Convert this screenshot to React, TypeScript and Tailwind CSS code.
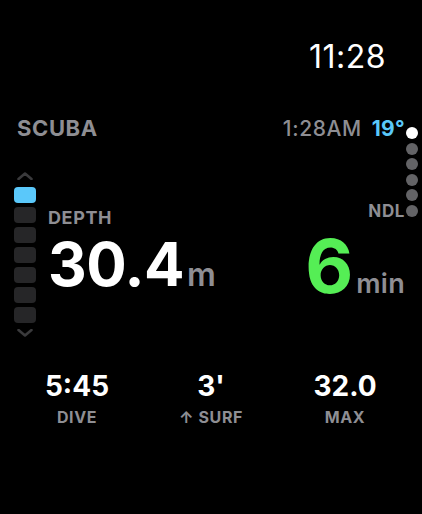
import React from "react";

const Chevron = ({ up }: { up: boolean }) => (
  <svg width="18" height="8" viewBox="0 0 18 8" className="block">
    <path
      d={up ? "M2.5 7 L9 1.5 L15.5 7" : "M2.5 1 L9 6.5 L15.5 1"}
      fill="none"
      stroke="#3a3a3c"
      strokeWidth="2.6"
      strokeLinecap="round"
      strokeLinejoin="round"
    />
  </svg>
);

export default function App() {
  const font = { fontFamily: "Inter, 'Noto Sans', sans-serif" };
  return (
    <div
      className="w-[422px] h-[514px] bg-black text-white flex flex-col overflow-hidden"
      style={font}
    >
      {/* Clock */}
      <div className="pt-[41px] pr-[36px] flex justify-end">
        <span className="text-[32px] leading-none font-normal tracking-[0.5px]">11:28</span>
      </div>

      {/* Main grid */}
      <div className="mt-[44px] pl-[14px] pr-[4px] grid grid-cols-[22px_1fr_auto_12px] grid-rows-[22px_auto] gap-x-0">
        {/* Row 1 */}
        <div className="col-start-1 col-span-2 row-start-1 pl-[3px] self-start">
          <span className="text-[22px] leading-none font-bold text-[#8e8e93] tracking-[0.6px]">SCUBA</span>
        </div>
        <div className="col-start-3 row-start-1 self-start pt-[1px] pr-[1px] flex items-baseline gap-[10px] whitespace-nowrap">
          <span className="text-[21px] leading-none font-medium text-[#8e8e93] tracking-[0.6px]">1:28AM</span>
          <span className="text-[21px] leading-none font-bold text-[#5ac8fa] tracking-[0.3px]">19°</span>
        </div>
        <div className="col-start-4 row-start-1 row-span-2 self-start mt-[10px] flex flex-col gap-[3.6px]">
          <div className="w-[12px] h-[12px] rounded-full bg-white" />
          <div className="w-[12px] h-[12px] rounded-full bg-[#636366]" />
          <div className="w-[12px] h-[12px] rounded-full bg-[#636366]" />
          <div className="w-[12px] h-[12px] rounded-full bg-[#636366]" />
          <div className="w-[12px] h-[12px] rounded-full bg-[#636366]" />
          <div className="w-[12px] h-[12px] rounded-full bg-[#636366]" />
        </div>

        {/* Row 2: gauge */}
        <div className="col-start-1 row-start-2 self-start mt-[33px] flex flex-col items-center">
          <Chevron up />
          <div className="mt-[7px] flex flex-col gap-[4px]">
            <div className="w-[22px] h-[16px] rounded-[4px] bg-[#5ac8fa]" />
            <div className="w-[22px] h-[16px] rounded-[4px] bg-[#262628]" />
            <div className="w-[22px] h-[16px] rounded-[4px] bg-[#262628]" />
            <div className="w-[22px] h-[16px] rounded-[4px] bg-[#262628]" />
            <div className="w-[22px] h-[16px] rounded-[4px] bg-[#262628]" />
            <div className="w-[22px] h-[16px] rounded-[4px] bg-[#262628]" />
            <div className="w-[22px] h-[16px] rounded-[4px] bg-[#262628]" />
          </div>
          <div className="mt-[6px]">
            <Chevron up={false} />
          </div>
        </div>

        {/* Row 2: depth */}
        <div className="col-start-2 row-start-2 self-start mt-[70px] pl-[12px] flex flex-col">
          <span className="text-[18px] leading-none font-bold text-[#8e8e93] tracking-[0.6px]">DEPTH</span>
          <div className="mt-[7px] flex items-baseline">
            <span className="text-[60px] leading-none font-bold tracking-[-0.5px]">30.4</span>
            <span className="ml-[3px] text-[32px] leading-none font-semibold text-[#8e8e93]">m</span>
          </div>
        </div>

        {/* Row 2: NDL */}
        <div className="col-start-3 row-start-2 self-start mt-[64px] pr-[1px] flex flex-col items-end">
          <span className="text-[17px] leading-none font-bold text-[#8e8e93] tracking-[0.6px]">NDL</span>
          <div className="mt-[9px] flex items-baseline">
            <span className="text-[74px] leading-none font-bold text-[#55ee55] tracking-[-1px]">6</span>
            <span className="ml-[4px] text-[27px] leading-none font-semibold text-[#8e8e93] tracking-[0.3px]">min</span>
          </div>
        </div>
      </div>

      {/* Bottom stats */}
      <div className="mt-[auto] mb-[89px] px-[10px] grid grid-cols-3">
        {[
          ["5:45", "DIVE"],
          ["3'", "↑ SURF"],
          ["32.0", "MAX"],
        ].map(([v, l]) => (
          <div key={l} className="flex flex-col items-center">
            <span className="text-[28px] leading-none font-bold">{v}</span>
            <span className="mt-[9px] text-[16px] leading-none font-bold text-[#8e8e93] tracking-[0.6px]">{l}</span>
          </div>
        ))}
      </div>
    </div>
  );
}
